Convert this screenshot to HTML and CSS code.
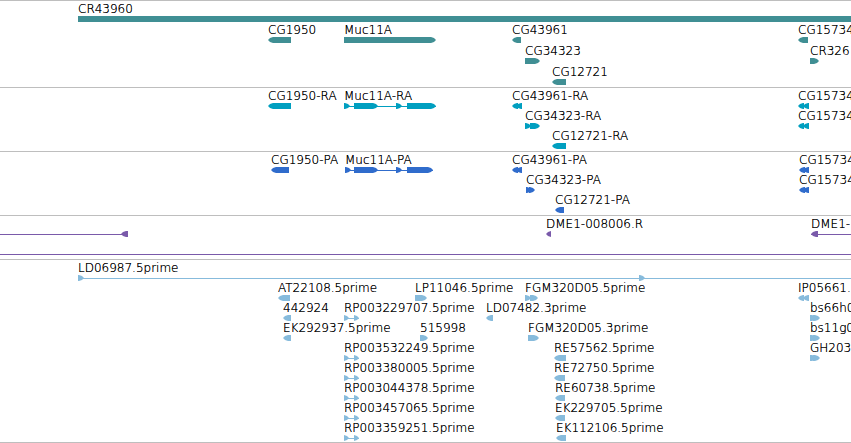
FILE: index.html
```html
<!DOCTYPE html>
<html lang="en">

<head>
    <meta charset="UTF-8">
    <meta name="viewport" content="width=device-width, initial-scale=1.0">
    <title>Genome Browser</title>
    <link rel="stylesheet" href="styles.css">
</head>

<body>
    <main id="browser" class="browser"></main>
    <script src="tracks.js"></script>
</body>

</html>
```

FILE: styles.css
```css
body {
    margin: 0;
    background-color: #fff;
    color: #000;
    font-family: "DejaVu Sans", Verdana, sans-serif;
    font-size: 12px;
    font-weight: 200;
    line-height: 14px;
}

/* All the tracks, closed by a line at the bottom */
.browser {
    border-bottom: 1px solid #bebebe;
}

.track {
    border-top: 1px solid #bebebe;
    padding: 1px 0 2px;
}

.row {
    position: relative;
    height: 20px;
    overflow: hidden;
}

/* Features are placed by their position on the sequence */
.feature {
    position: absolute;
    top: 0;
    display: flex;
    flex-direction: column;
}

/* The shadow darkens the thin strokes */
.label {
    height: 14px;
    white-space: nowrap;
    text-shadow: 0 0 0 #000;
}

.glyph {
    display: block;
    height: 6px;
    fill: currentColor;
}

/* Track types */
.genes {
    padding-bottom: 1px;
}

.genes .row {
    height: 21px;
}

.genes .glyph {
    color: #408f94;
}

.transcripts .glyph {
    color: #009fc0;
}

.proteins .glyph {
    color: #306ccc;
}

.clones .glyph {
    color: #7a5aaa;
}

.ests {
    padding-bottom: 1px;
}

.ests .glyph {
    color: #87bbdc;
}
```

FILE: tracks.js
```js
// End position for features that run past the right edge
var END = 4000;

// part: [start, end, direction], direction is 'L', 'R' or '' for a plain box
function feature(name, parts, line) {
    return { name: name, parts: parts, line: line };
}

function est(name) {
    return feature(name, [[344, 349, 'R'], [354, 359, 'R']], [344, 359]);
}

function shortEst(name) {
    return feature(name, [[810, 817, 'R'], [813, 820, 'R']]);
}

var tracks = [
    {
        type: 'genes',
        rows: [
            [feature('CR43960', [[78, END, '']])],
            [
                feature('CG1950', [[268, 291, 'L']]),
                feature('Muc11A', [[344, 436, 'R']]),
                feature('CG43961', [[512, 521, 'L']]),
                feature('CG15734', [[798, 808, 'L']])
            ],
            [
                feature('CG34323', [[525, 540, 'R']]),
                feature('CR326', [[810, 819, 'R']])
            ],
            [feature('CG12721', [[552, 566, 'L']])]
        ]
    },
    {
        type: 'transcripts',
        rows: [
            [
                feature('CG1950-RA', [[268, 291, 'L']]),
                feature('Muc11A-RA', [[344, 350, 'R'], [354, 378, 'R'], [396, 402, 'R'], [407, 436, 'R']], [344, 436]),
                feature('CG43961-RA', [[512, 518, 'L'], [516, 522, 'L']]),
                feature('CG15734', [[798, 804, 'L'], [803, 809, 'L']])
            ],
            [
                feature('CG34323-RA', [[525, 531, 'R'], [530, 540, 'R']]),
                feature('CG15734', [[798, 804, 'L'], [803, 809, 'L']])
            ],
            [feature('CG12721-RA', [[552, 566, 'L']])]
        ]
    },
    {
        type: 'proteins',
        rows: [
            [
                feature('CG1950-PA', [[271, 289, 'L']]),
                feature('Muc11A-PA', [[345, 351, 'R'], [354, 378, 'R'], [396, 402, 'R'], [407, 433, 'R']], [345, 433]),
                feature('CG43961-PA', [[512, 518, 'L'], [516, 522, 'L']]),
                feature('CG15734', [[799, 805, 'L'], [803, 809, 'L']])
            ],
            [
                feature('CG34323-PA', [[526, 532, 'R'], [529, 535, 'R']]),
                feature('CG15734', [[799, 805, 'L'], [803, 809, 'L']])
            ],
            [feature('CG12721-PA', [[555, 564, 'L']])]
        ]
    },
    {
        type: 'clones',
        rows: [
            [
                feature('', [[121, 128, 'L']], [0, 128]),
                feature('DME1-008006.R', [[546, 551, 'L']]),
                feature('DME1-', [[811, 818, 'L']], [811, END])
            ],
            [feature('', [], [0, END])]
        ]
    },
    {
        type: 'ests',
        rows: [
            [feature('LD06987.5prime', [[78, 84, 'R'], [639, 645, 'R']], [78, END])],
            [
                feature('AT22108.5prime', [[278, 290, 'L']]),
                feature('LP11046.5prime', [[415, 427, 'R']]),
                feature('FGM320D05.5prime', [[525, 531, 'R'], [530, 538, 'R']]),
                feature('IP05661.', [[798, 804, 'L'], [803, 809, 'L']])
            ],
            [
                feature('442924', [[283, 291, 'L']]),
                est('RP003229707.5prime'),
                feature('LD07482.3prime', [[486, 493, 'L']]),
                shortEst('bs66h0')
            ],
            [
                feature('EK292937.5prime', [[283, 291, 'L']]),
                feature('515998', [[420, 428, 'R']]),
                feature('FGM320D05.3prime', [[528, 539, 'R']]),
                shortEst('bs11g0')
            ],
            [
                est('RP003532249.5prime'),
                feature('RE57562.5prime', [[554, 566, 'L']]),
                shortEst('GH203')
            ],
            [est('RP003380005.5prime'), feature('RE72750.5prime', [[554, 565, 'L']])],
            [est('RP003044378.5prime'), feature('RE60738.5prime', [[555, 565, 'L']])],
            [est('RP003457065.5prime'), feature('EK229705.5prime', [[555, 565, 'L']])],
            [est('RP003359251.5prime'), feature('EK112106.5prime', [[556, 566, 'L']])]
        ]
    }
];

// Outline of one box, with a rounded pointed head on the side it is transcribed to
function partPath(start, end, direction) {
    if (direction == '') {
        return 'M' + start + ' 0H' + end + 'V6H' + start + 'Z';
    }
    var tip = direction == 'R' ? end : start;
    var back = direction == 'R' ? start : end;
    var step = direction == 'R' ? -1 : 1;
    var neck = tip + step * 5;
    var cheek = tip + step * 2;
    return 'M' + back + ' 0H' + neck + 'L' + cheek + ' 1L' + tip + ' 3L' + cheek + ' 5L' + neck + ' 6H' + back + 'Z';
}

function drawFeature(item) {
    var ends = item.parts.concat(item.line ? [item.line] : []);
    var left = Math.min.apply(null, ends.map(function (p) { return p[0]; }));
    var right = Math.max.apply(null, ends.map(function (p) { return p[1]; }));

    var paths = item.parts.map(function (p) {
        return '<path d="' + partPath(p[0] - left, p[1] - left, p[2]) + '"/>';
    }).join('');
    if (item.line) {
        paths += '<path d="M0 3H' + (right - left) + 'V4H0Z"/>';
    }

    return '<div class="feature" style="left: ' + left + 'px">' +
        '<span class="label">' + item.name + '</span>' +
        '<svg class="glyph" width="' + (right - left) + '" height="6">' + paths + '</svg>' +
        '</div>';
}

document.getElementById('browser').innerHTML = tracks.map(function (track) {
    return '<section class="track ' + track.type + '">' + track.rows.map(function (row) {
        return '<div class="row">' + row.map(drawFeature).join('') + '</div>';
    }).join('') + '</section>';
}).join('');
```
